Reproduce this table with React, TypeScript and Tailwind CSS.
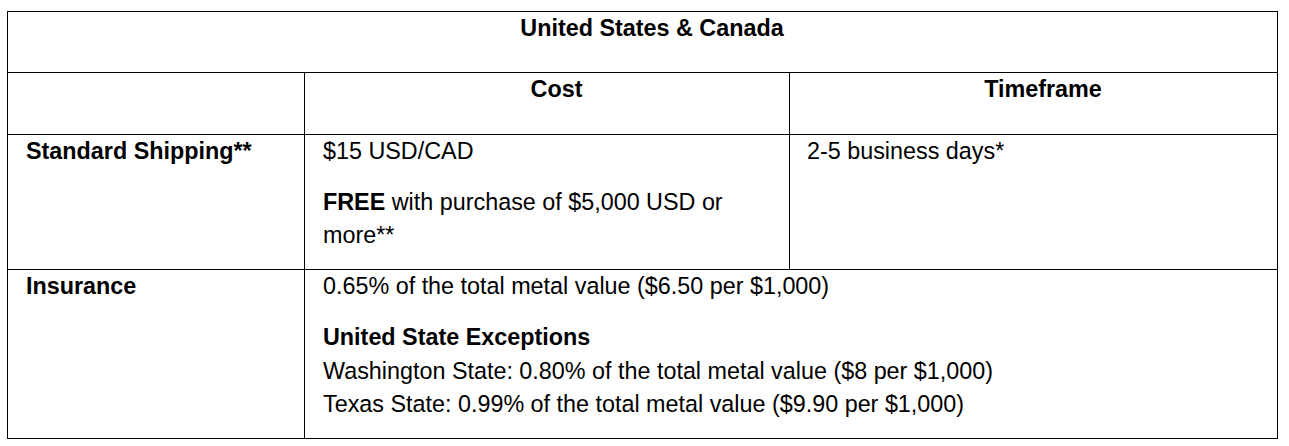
import React from "react";

const cell = "border-r border-b border-black";

export default function App() {
  return (
    <div className="w-[1289px] h-[446px] bg-white pt-[11px] pl-[7px] text-black" style={{ fontFamily: '"Liberation Sans", Arial, sans-serif' }}>
      <div className="grid grid-cols-[297px_485px_488px] grid-rows-[61px_62px_135px_169px] w-[1271px] border-l border-t border-black text-[23.35px] leading-[33.5px]">
        <div className={`${cell} col-span-3 text-center font-bold pl-[19px]`}>
          <div>United States &amp; Canada</div>
        </div>
        <div className={cell}></div>
        <div className={`${cell} text-center font-bold pl-[19px]`}>
          <div>Cost</div>
        </div>
        <div className={`${cell} text-center font-bold pl-[19px]`}>
          <div>Timeframe</div>
        </div>

        <div className={`${cell} pl-[18px] pr-[18px] font-bold`}>
          <div className="-mt-[0.5px]">Standard Shipping**</div>
        </div>
        <div className={`${cell} pl-[18px] pr-[18px]`}>
          <div className="-mt-[0.5px]">
            <p className="mb-[17.5px]">$15 USD/CAD</p>
            <p>
              <strong className="font-bold">FREE</strong> with purchase of $5,000 USD or more**
            </p>
          </div>
        </div>
        <div className={`${cell} pl-[17px] pr-[18px]`}>
          <div className="-mt-[0.5px]">2-5 business days*</div>
        </div>

        <div className={`${cell} pl-[18px] pr-[18px] font-bold`}>
          <div>Insurance</div>
        </div>
        <div className={`${cell} col-span-2 pl-[18px] pr-[18px]`}>
          <div>
            <p className="mb-[17.5px]">0.65% of the total metal value ($6.50 per $1,000)</p>
            <p>
              <strong className="font-bold">United State Exceptions</strong>
              <br />
              Washington State: 0.80% of the total metal value ($8 per $1,000)
              <br />
              Texas State: 0.99% of the total metal value ($9.90 per $1,000)
            </p>
          </div>
        </div>
      </div>
    </div>
  );
}
